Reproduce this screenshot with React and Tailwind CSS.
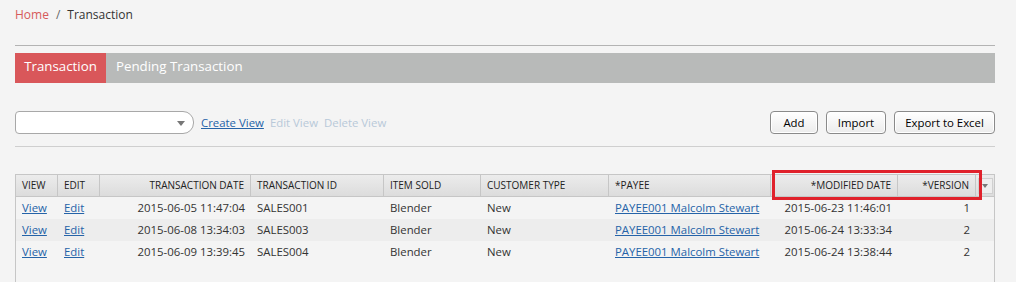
import React from "react";

const cols = [
  { label: "VIEW", w: 42, align: "left" },
  { label: "EDIT", w: 42, align: "left" },
  { label: "TRANSACTION DATE", w: 151, align: "right" },
  { label: "TRANSACTION ID", w: 133, align: "left" },
  { label: "ITEM SOLD", w: 97, align: "left" },
  { label: "CUSTOMER TYPE", w: 128, align: "left" },
  { label: "*PAYEE", w: 162, align: "left" },
  { label: "*MODIFIED DATE", w: 127, align: "right" },
  { label: "*VERSION", w: 78, align: "right" },
];

const rows = [
  ["2015-06-05 11:47:04", "SALES001", "2015-06-23 11:46:01", "1"],
  ["2015-06-08 13:34:03", "SALES003", "2015-06-24 13:33:34", "2"],
  ["2015-06-09 13:39:45", "SALES004", "2015-06-24 13:38:44", "2"],
];

function Btn({ children, w }) {
  return (
    <button
      className={`h-[23px] ${w} rounded-[4px] border border-[#8a8a8a] bg-gradient-to-b from-white to-[#ececec] text-[11.4px] text-black shadow-[inset_0_0_0_1px_#fff]`}
    >
      {children}
    </button>
  );
}

export default function App() {
  return (
    <div
      className="h-[282px] w-[1016px] overflow-hidden bg-[#f4f4f4] text-[#333]"
      style={{ fontFamily: '"Open Sans", "Noto Sans", sans-serif' }}
    >
      <div className="px-[15px] pr-[21px]">
        {/* breadcrumb */}
        <div className="flex h-[30px] items-center text-[12px] leading-none">
          <span className="text-[#d65a5a]">Home</span>
          <span className="mx-[7px] text-[#666]">/</span>
          <span className="text-[#333]">Transaction</span>
        </div>
        <div className="mt-[15px] h-px bg-[#b3b3b3]" />
        {/* tabs */}
        <div className="mt-[7px] flex h-[30px] bg-[#b8bab9] text-[13.3px] leading-none text-white">
          <div className="flex w-[91px] items-center justify-center bg-[#d9575a] pb-[2px]">Transaction</div>
          <div className="flex items-center pb-[2px] pl-[10px]">Pending Transaction</div>
        </div>
        {/* toolbar */}
        <div className="mt-[28px] flex h-[23px] items-center">
          <div className="relative h-[23px] w-[179px] rounded-l-[4px] rounded-r-[11px] border border-[#a8a8a8] bg-white">
            <svg className="absolute right-[8px] top-[9px]" width="8" height="5" viewBox="0 0 8 5">
              <path d="M0 0 L8 0 L4 5 Z" fill="#777" />
            </svg>
          </div>
          <span className="ml-[7px] text-[11.4px] text-[#2563a8] underline">Create View</span>
          <span className="ml-[6px] text-[11.4px] text-[#b8c9d9]">Edit View</span>
          <span className="ml-[6px] text-[11.4px] text-[#b8c9d9]">Delete View</span>
          <div className="ml-auto flex gap-[8px]">
            <Btn w="w-[48px]">Add</Btn>
            <Btn w="w-[60px]">Import</Btn>
            <Btn w="w-[101px]">Export to Excel</Btn>
          </div>
        </div>
        <div className="mt-[12px] h-px bg-[#cfcfcf]" />
        {/* table */}
        <div className="relative mt-[27px] h-[120px] border-x border-t border-[#c6c6c6]">
          <div className="flex h-[22px] border-b border-[#c6c6c6] bg-gradient-to-b from-[#ececec] to-[#dcdcdc] text-[10px] text-[#222]">
            {cols.map((c) => (
              <div
                key={c.label}
                style={{ width: c.w }}
                className={`flex shrink-0 items-center border-r border-[#c6c6c6] px-[6px] ${
                  c.align === "right" ? "justify-end" : "justify-start"
                }`}
              >
                {c.label}
              </div>
            ))}
            <div className="flex flex-1 items-center justify-center">
              <div className="flex h-[16px] w-[15px] items-center justify-center border border-[#d0d0d0] bg-[#eeeeee]">
                <svg width="6" height="4" viewBox="0 0 6 4">
                  <path d="M0 0 L6 0 L3 4 Z" fill="#777" />
                </svg>
              </div>
            </div>
          </div>
          {rows.map((r, i) => (
            <div
              key={i}
              className={`flex h-[22px] items-center text-[11.4px] text-[#333] ${
                i === 1 ? "bg-[#ededed]" : "bg-[#f4f4f4]"
              }`}
            >
              <div style={{ width: 42 }} className="shrink-0 px-[6px] text-[#2563a8] underline">View</div>
              <div style={{ width: 42 }} className="shrink-0 px-[6px] text-[#2563a8] underline">Edit</div>
              <div style={{ width: 151 }} className="shrink-0 px-[6px] text-right">{r[0]}</div>
              <div style={{ width: 133 }} className="shrink-0 px-[6px]">{r[1]}</div>
              <div style={{ width: 97 }} className="shrink-0 px-[6px]">Blender</div>
              <div style={{ width: 128 }} className="shrink-0 px-[6px]">New</div>
              <div style={{ width: 162 }} className="shrink-0 whitespace-nowrap px-[6px] text-[#2563a8] underline">PAYEE001 Malcolm Stewart</div>
              <div style={{ width: 127 }} className="shrink-0 px-[6px] text-right">{r[2]}</div>
              <div style={{ width: 78 }} className="shrink-0 px-[6px] text-right">{r[3]}</div>
            </div>
          ))}
          <div className="pointer-events-none absolute left-[756px] top-[-5px] h-[30px] w-[210px] border-[3px] border-[#e0212b]" />
        </div>
      </div>
    </div>
  );
}
